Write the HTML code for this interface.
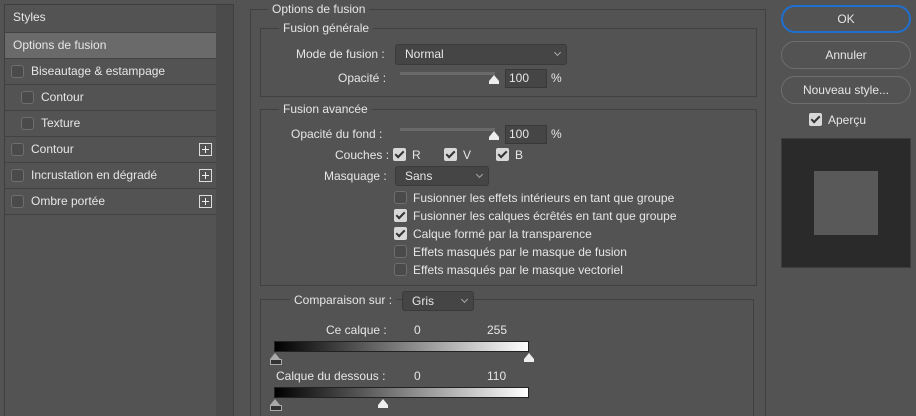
<!DOCTYPE html>
<html style="overflow:hidden;width:916px;height:416px"><head><meta charset="utf-8"><style>
*{box-sizing:border-box;margin:0;padding:0}
body{width:916px;height:416px;background:#535353;font-family:"Liberation Sans",sans-serif;font-size:12px;color:#e6e6e6;position:relative;overflow:hidden}
.a{position:absolute;white-space:nowrap}
.box{position:absolute;border:1px solid #404040}
.lg{position:absolute;background:#535353;padding:0 4px;line-height:14px}
.cb{position:absolute;width:13px;height:13px;border:1px solid #6e6e6e;border-radius:3px;background:#4a4a4a}
.ck{position:absolute;width:13px;height:13px;border-radius:2px;background:#d8d8d8}
.ck:after{content:"";position:absolute;left:4px;top:1px;width:3px;height:7px;border:solid #333;border-width:0 2px 2px 0;transform:rotate(45deg)}
.sel{position:absolute;background:#454545;border:1px solid #3a3a3a;border-radius:3px;padding-left:9px;line-height:18px}
.sel:after{content:"";position:absolute;right:6px;top:5px;width:4px;height:4px;border:solid #aaa;border-width:0 1px 1px 0;transform:rotate(45deg)}
.inp{position:absolute;background:#454545;border:1px solid #383838;padding-left:3px;line-height:16px}
.row{position:absolute;left:5px;width:211px;height:26px;border-bottom:1px solid #424242;line-height:25px}
.plus{position:absolute;right:4px;top:6px;width:13px;height:13px;border:1px solid #ddd}
.plus:before{content:"";position:absolute;left:2px;top:5px;width:7px;height:1px;background:#eee}
.plus:after{content:"";position:absolute;left:5px;top:2px;width:1px;height:7px;background:#eee}
.btn{position:absolute;left:781px;width:130px;height:28px;border:1px solid #6e6e6e;border-radius:14px;text-align:center;line-height:26px}
.thumb{position:absolute;width:0;height:0;border-left:5px solid transparent;border-right:5px solid transparent;border-bottom:6px solid #eee}
.thumb:after{content:"";position:absolute;left:-5px;top:6px;width:10px;height:3px;background:#eee}
.thumb.d{border-bottom-color:#aaa}
.thumb.d:after{background:#333;border:1px solid #aaa;height:4px}
.grad{position:absolute;left:274px;width:255px;height:11px;background:linear-gradient(to right,#000,#fff);border:1px solid #222}
</style></head><body>
<div class="box" style="left:4px;top:4px;width:230px;height:412px;border-color:#3e3e3e;border-bottom:none"></div>
<div class="a" style="left:216px;top:5px;width:17px;height:411px;background:#4b4b4b"></div>
<div class="row" style="top:5px;height:28px;padding-left:8px">Styles</div>
<div class="row" style="top:33px;height:26px;background:#6a6a6a;padding-left:8px">Options de fusion</div>
<div class="row" style="top:59px;padding-left:26px"><div class="cb" style="left:6px;top:6px"></div>Biseautage &amp; estampage</div>
<div class="row" style="top:85px;padding-left:36px"><div class="cb" style="left:16px;top:6px"></div>Contour</div>
<div class="row" style="top:111px;padding-left:36px"><div class="cb" style="left:16px;top:6px"></div>Texture</div>
<div class="row" style="top:137px;padding-left:26px"><div class="cb" style="left:6px;top:6px"></div>Contour<div class="plus"></div></div>
<div class="row" style="top:163px;padding-left:26px"><div class="cb" style="left:6px;top:6px"></div>Incrustation en dégradé<div class="plus"></div></div>
<div class="row" style="top:189px;padding-left:26px"><div class="cb" style="left:6px;top:6px"></div>Ombre portée<div class="plus"></div></div>

<div class="box" style="left:250px;top:9px;width:516px;height:407px;border-bottom:none"></div>
<div class="lg" style="left:268px;top:2px">Options de fusion</div>
<div class="box" style="left:260px;top:28px;width:497px;height:69px"></div>
<div class="lg" style="left:279px;top:21px">Fusion générale</div>
<div class="a" style="left:296px;top:47px">Mode de fusion :</div>
<div class="sel" style="left:395px;top:44px;width:172px;height:21px">Normal</div>
<div class="a" style="left:338px;top:71px">Opacité :</div>
<div class="a" style="left:400px;top:72px;width:95px;height:3px;background:#6a6a6a"></div>
<div class="thumb" style="left:489px;top:75px"></div>
<div class="inp" style="left:505px;top:69px;width:42px;height:19px">100</div>
<div class="a" style="left:551px;top:71px">%</div>

<div class="box" style="left:260px;top:109px;width:497px;height:177px"></div>
<div class="lg" style="left:279px;top:102px">Fusion avancée</div>
<div class="a" style="left:291px;top:127px">Opacité du fond :</div>
<div class="a" style="left:400px;top:128px;width:95px;height:3px;background:#6a6a6a"></div>
<div class="thumb" style="left:489px;top:131px"></div>
<div class="inp" style="left:505px;top:125px;width:42px;height:19px">100</div>
<div class="a" style="left:551px;top:127px">%</div>
<div class="a" style="left:335px;top:148px">Couches :</div>
<div class="ck" style="left:393px;top:148px"></div><div class="a" style="left:412px;top:148px">R</div>
<div class="ck" style="left:444px;top:148px"></div><div class="a" style="left:463px;top:148px">V</div>
<div class="ck" style="left:496px;top:148px"></div><div class="a" style="left:515px;top:148px">B</div>
<div class="a" style="left:324px;top:169px">Masquage :</div>
<div class="sel" style="left:395px;top:166px;width:94px;height:20px">Sans</div>
<div class="cb" style="left:394px;top:191px"></div><div class="a" style="left:413px;top:191px">Fusionner les effets intérieurs en tant que groupe</div>
<div class="ck" style="left:394px;top:209px"></div><div class="a" style="left:413px;top:209px">Fusionner les calques écrêtés en tant que groupe</div>
<div class="ck" style="left:394px;top:227px"></div><div class="a" style="left:413px;top:227px">Calque formé par la transparence</div>
<div class="cb" style="left:394px;top:245px"></div><div class="a" style="left:413px;top:245px">Effets masqués par le masque de fusion</div>
<div class="cb" style="left:394px;top:263px"></div><div class="a" style="left:413px;top:263px">Effets masqués par le masque vectoriel</div>

<div class="box" style="left:260px;top:299px;width:494px;height:117px;border-bottom:none"></div>
<div class="lg" style="left:290px;top:293px">Comparaison sur :</div>
<div class="sel" style="left:402px;top:291px;width:72px;height:20px">Gris</div>
<div class="a" style="left:326px;top:323px">Ce calque :</div>
<div class="a" style="left:414px;top:323px">0</div>
<div class="a" style="left:487px;top:323px">255</div>
<div class="grad" style="top:341px"></div>
<div class="thumb d" style="left:270px;top:353px"></div>
<div class="thumb" style="left:524px;top:353px"></div>
<div class="a" style="left:276px;top:369px">Calque du dessous :</div>
<div class="a" style="left:414px;top:369px">0</div>
<div class="a" style="left:487px;top:369px">110</div>
<div class="grad" style="top:387px"></div>
<div class="thumb d" style="left:270px;top:399px"></div>
<div class="thumb" style="left:378px;top:399px"></div>

<div class="btn" style="top:5px;border:2px solid #1f6fd0;line-height:24px">OK</div>
<div class="btn" style="top:41px">Annuler</div>
<div class="btn" style="top:76px">Nouveau style...</div>
<div class="ck" style="left:809px;top:113px"></div><div class="a" style="left:828px;top:113px">Aperçu</div>
<div class="a" style="left:781px;top:138px;width:130px;height:130px;background:#2a2a2a;border:1px solid #3c3c3c"></div>
<div class="a" style="left:814px;top:171px;width:64px;height:64px;background:#595959"></div>
</body></html>
